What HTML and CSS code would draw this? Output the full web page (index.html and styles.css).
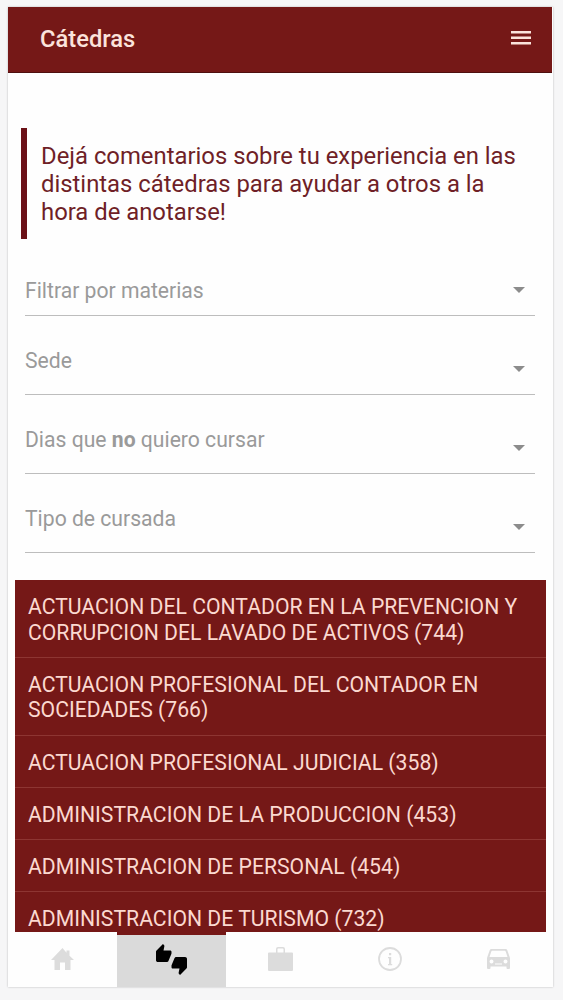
FILE: index.html
```html
<!DOCTYPE html>
<html lang="es">
<head>
    <meta charset="UTF-8">
    <meta name="viewport" content="width=device-width, initial-scale=1.0">
    <title>Cátedras</title>
    <link rel="stylesheet" href="styles.css">
</head>
<body>

<div class="app">
    <header class="toolbar">
        <h1>Cátedras</h1>
        <svg class="menu-icon" viewBox="0 0 20 14"><path d="M0 0h20v2.6H0zM0 5.5h20v2.6H0zM0 11h20v2.6H0z"/></svg>
    </header>

    <main class="content">
        <blockquote>Dejá comentarios sobre tu experiencia en las distintas cátedras para ayudar a otros a la hora de anotarse!</blockquote>

        <div class="filters">
            <div class="field field-first"><span>Filtrar por materias</span><i class="arrow"></i></div>
            <div class="field"><span>Sede</span><i class="arrow"></i></div>
            <div class="field"><span>Dias que <b>no</b> quiero cursar</span><i class="arrow"></i></div>
            <div class="field"><span>Tipo de cursada</span><i class="arrow"></i></div>
        </div>

        <ul class="materias">
            <li>ACTUACION DEL CONTADOR EN LA PREVENCION Y CORRUPCION DEL LAVADO DE ACTIVOS (744)</li>
            <li>ACTUACION PROFESIONAL DEL CONTADOR EN SOCIEDADES (766)</li>
            <li>ACTUACION PROFESIONAL JUDICIAL (358)</li>
            <li>ADMINISTRACION DE LA PRODUCCION (453)</li>
            <li>ADMINISTRACION DE PERSONAL (454)</li>
            <li>ADMINISTRACION DE TURISMO (732)</li>
        </ul>
    </main>

    <nav class="tabs">
        <a class="tab"><svg class="icon-home" viewBox="0 0 23 22"><path d="M9 22v-7.500h5V22h5.500V12H23l-4.500-4.300V2.500h-3v2.300L11.500 0 0 12h3.500v10z"/></svg></a>
        <a class="tab active"><svg class="icon-thumbs" viewBox="0 0 24 24"><path d="M12 6c0-.55-.45-1-1-1H5.820l.66-3.180.02-.23c0-.31-.13-.59-.33-.8L5.380 0 .44 4.940C.17 5.210 0 5.590 0 6v6.500c0 .83.67 1.500 1.500 1.500h6.750c.62 0 1.150-.38 1.380-.91l2.260-5.290c.07-.17.11-.36.11-.55V6zm10.500 4h-6.750c-.62 0-1.150.38-1.380.91l-2.260 5.290c-.07.17-.11.36-.11.55V18c0 .55.45 1 1 1h5.180l-.66 3.180-.02.24c0 .31.13.59.33.8l.79.78 4.940-4.940c.27-.27.44-.65.44-1.060v-6.500c0-.83-.67-1.500-1.500-1.500z"/></svg></a>
        <a class="tab"><svg class="icon-work" viewBox="0 0 25 24"><path d="M8 5.500V2q0-2 2-2h5q2 0 2 2v3.500h7q1 0 1 1V23q0 1-1 1H1q-1 0-1-1V6.500q0-1 1-1zm1.500 0h6V2.300q0-.8-.8-.8h-4.400q-.8 0-.8.800z"/></svg></a>
        <a class="tab"><svg class="icon-info" viewBox="0 0 24 24"><circle cx="12" cy="12" r="11" fill="none" stroke="#dcdcdc" stroke-width="1.800"/><path d="M11 6h2.200v2.200H11zM10 10h3.200v7h1v1.200h-4.200V17h1v-5.800h-1z"/></svg></a>
        <a class="tab"><svg class="icon-car" viewBox="0 0 23 20"><path d="M4.500 0h14q1.400 0 1.900 1.400L23 9v10q0 1-1 1h-1.500q-1 0-1-1v-1.500h-16V19q0 1-1 1H1q-1 0-1-1V9l2.600-7.600Q3.100 0 4.500 0zm.8 1.800q-.7 0-1 .7L2.500 8h18l-1.800-5.500q-.3-.7-1-.7zM4.500 10.500a2 2 0 1 0 0 4 2 2 0 1 0 0-4zm14 0a2 2 0 1 0 0 4 2 2 0 1 0 0-4zM8 14.500v1h7v-1z"/></svg></a>
    </nav>
</div>

</body>
</html>
```

FILE: styles.css
```css
* {
    box-sizing: border-box;
}
body {
    margin: 0;
    padding: 7px 10px 13px 8px;
    height: 1000px;
    background: #f6f6f7;
    font-family: Roboto, sans-serif;
}
.app {
    display: flex;
    flex-direction: column;
    height: 980px;
    background: #fefefe;
    box-shadow: 0 0 2px rgba(0, 0, 0, 0.25);
}
.toolbar {
    display: flex;
    align-items: center;
    justify-content: space-between;
    flex: none;
    height: 66px;
    margin-right: 1px;
    padding: 0 21px 3px 32px;
    background: #751817;
    border-bottom: 1px solid #4f1010;
}
.toolbar h1 {
    margin: 1px 0 0;
    font-size: 23.75px;
    font-weight: 500;
    color: #fbe3dc;
}
.menu-icon {
    width: 20px;
    height: 14px;
    fill: #fbe3dc;
}
.content {
    flex: 1;
    min-height: 0;
    overflow: hidden;
    padding: 55px 7px 0;
}
blockquote {
    margin: 0 0 0 6px;
    padding: 14px 16px 13px 14px;
    border-left: 6px solid #6b1117;
    font-size: 23.85px;
    line-height: 28px;
    color: #6f1f27;
}
.filters {
    padding: 0 11px 0 10px;
}
.field {
    display: flex;
    justify-content: space-between;
    height: 79px;
    padding: 31px 10px 0 0;
    border-bottom: 1px solid #bdbdbd;
    font-size: 21.15px;
    line-height: 28px;
    color: #9a9a9a;
}
.field-first {
    height: 77px;
    padding-top: 38px;
}
.arrow {
    margin-top: 19px;
    width: 0;
    height: 0;
    border: 6.5px solid transparent;
    border-top-color: #8c8c8c;
    border-bottom: 0;
}
.field-first .arrow {
    margin-top: 10px;
}
.materias {
    margin: 27.4px 0 0;
    padding: 0;
    list-style: none;
    background: #751817;
}
.materias li {
    padding: 13.7px 14px 11.9px 13px;
    border-bottom: 1px solid #8d3532;
    font-size: 21.2px;
    line-height: 25.6px;
    color: #fbd9d0;
}
.tabs {
    display: flex;
    flex: none;
    height: 55px;
    background: #fefefe;
}
.tab {
    display: flex;
    align-items: center;
    justify-content: center;
    flex: 1;
    padding-bottom: 1px;
    fill: #dcdcdc;
}
.tab.active {
    padding-bottom: 3px;
    border-top: 3px solid #751817;
    background: #dadada;
    fill: #000;
}
.icon-home {
    width: 23px;
}
.icon-thumbs {
    width: 31px;
}
.icon-work {
    width: 25px;
    margin-bottom: 1px;
}
.icon-info {
    width: 24px;
}
.icon-car {
    width: 23px;
}
```
